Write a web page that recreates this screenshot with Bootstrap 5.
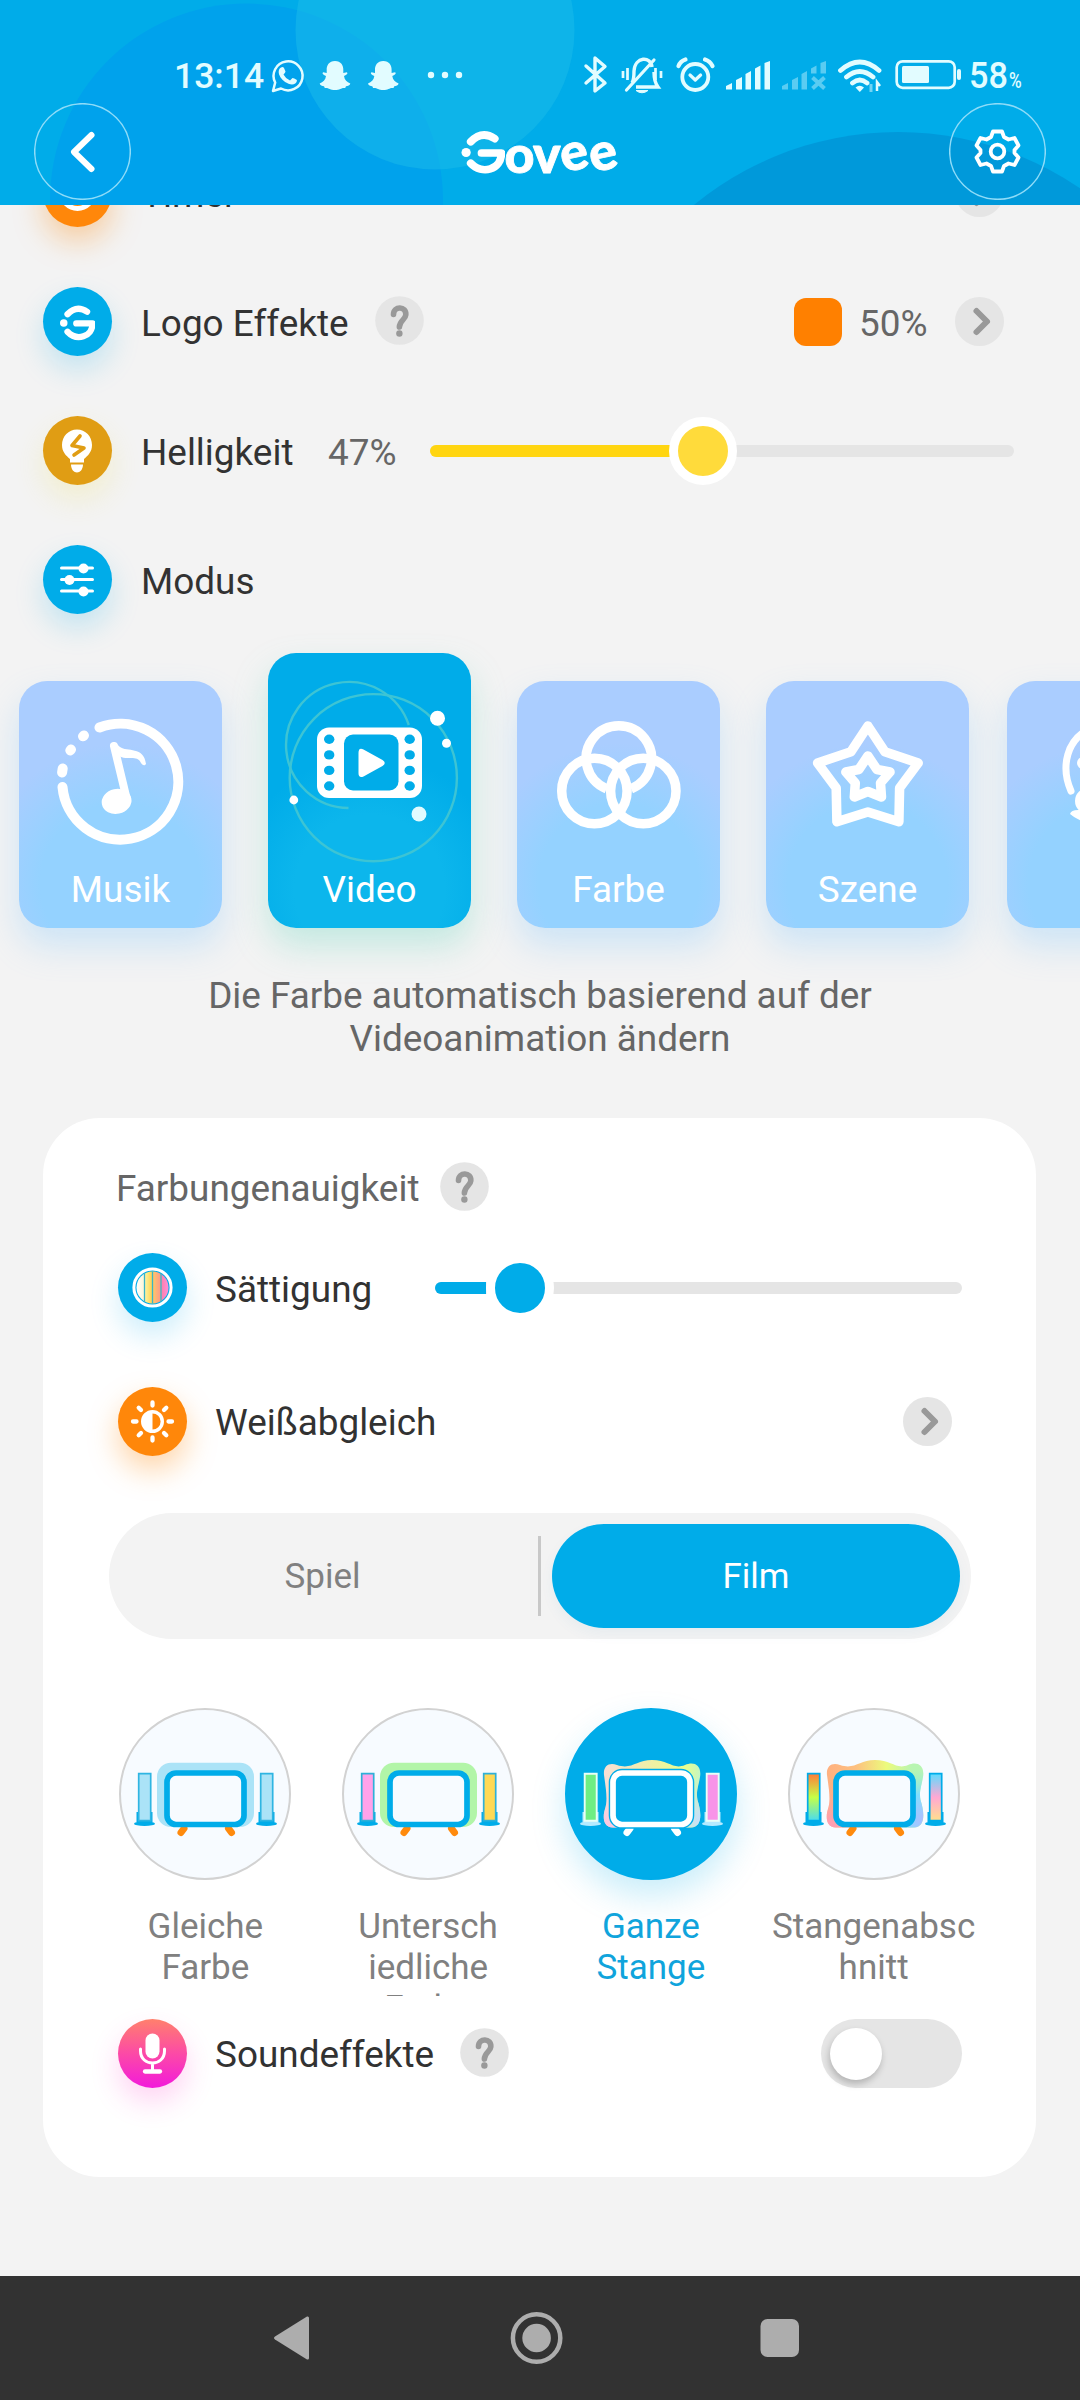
<!DOCTYPE html>
<html lang="de">
<head>
<meta charset="utf-8">
<title>Govee</title>
<link href="https://cdn.jsdelivr.net/npm/bootstrap@5.3.0/dist/css/bootstrap.min.css" rel="stylesheet">
<style>
html,body{margin:0;background:#f3f3f3}
body{width:1080px;height:2400px;overflow:hidden;font-family:Roboto,"Noto Sans",sans-serif;font-size:36.9px;line-height:43px;color:#323232}
svg{display:block;flex:none}
.topbar{height:205px;background:#00ace9;z-index:2;overflow:hidden;color:#fff}
.decor{left:0;top:0}
.statusrow{padding:52px 0 0 174px;height:103px;color:#e2fcff}
.clock{font-size:35.500px;font-weight:500;width:89px;line-height:48px}
.batt{font-size:36px;font-weight:500;width:40px;line-height:48px;margin-left:2px;transform:scaleX(.95);transform-origin:0 50%}
.pct{font-size:21.500px;font-weight:500;line-height:24px;padding-top:17px;transform:scaleX(.8);transform-origin:0 50%}
.appbar{padding:0 34px;height:97px}
.wordmark{overflow:visible}
.scroller{margin-top:-77px;height:2148px;overflow:hidden}
.setting{height:129px;padding:0 76px 0 43px}
.setting>.cap{margin-left:29px}
.orb{width:69px;height:69px;border-radius:50%;flex:none}
.orb-blue{background:#00ace9;box-shadow:0 14px 30px rgba(0,172,233,.2)}
.orb-orange{background:#ff870a;box-shadow:0 14px 30px rgba(255,135,10,.35)}
.orb-amber{background:#e09d14;box-shadow:0 14px 30px rgba(240,220,60,.2)}
.orb-pink{background:linear-gradient(#ff806c,#fc4aa6 50%,#f21adb);box-shadow:0 14px 28px rgba(255,60,200,.22)}
.cap{padding-top:3px;white-space:nowrap}
.muted{color:#666}
.helpmark{margin-bottom:2px}
.swatch{width:48px;height:48px;border-radius:12px;background:#ff8000}
.track{height:12px;border-radius:6px;background:#e5e5e5}
.fillbar{height:12px;border-radius:6px 0 0 6px}
.knob{width:68px;height:68px;border-radius:50%;border:9px solid #fff;top:-28px;transform:translateX(-50%)}
.modes{height:284px;padding-left:19px;gap:46px}
.mode{width:203px;height:247px;border-radius:28px;flex:none;color:#fff;background:radial-gradient(circle at 50% 82%,#94d2ff 0,#94d2ff 80px,#aacdff 140px);box-shadow:0 18px 34px rgba(120,195,255,.3)}
.mode.on{height:275px;background:radial-gradient(circle at 50% 86%,#0cb6ec 0,#0cb6ec 75px,#00ace9 135px);box-shadow:0 18px 34px rgba(110,215,195,.36)}
.mode span{line-height:46px;height:61px}
.info{padding-top:46px;height:190px;color:#666;line-height:43px}
.panel{margin:0 44px 0 43px;height:1059px;border-radius:57px;background:#fff}
.seg{margin:0 65px 0 66px;height:126px;border-radius:63px;background:#f3f3f3;font-size:35px}
.seg .pill{width:408px;height:104px;border-radius:52px;background:#00ace9;color:#fff;box-shadow:0 6px 14px rgba(0,120,170,.05)}
.scenes{padding:69px 51px 0;height:357px;font-size:35px;line-height:41px;color:#808080}
.scene{width:223px;height:288px}
.disc{width:172px;height:172px;border-radius:50%;background:#f7fbff;border:2px solid #d2d2d2}
.disc.on{background:#00ace9;border-color:#00ace9;box-shadow:0 16px 34px rgba(0,172,233,.22)}
.disc svg{margin:-2px -3px -2px -1px}
.cliptext{height:91px;margin-top:26px;overflow:hidden}
.toggle{width:141px;height:69px;border-radius:35px;background:#e5e5e5;padding:8.500px}
.toggle div{width:52px;height:52px;border-radius:50%;background:#fff;box-shadow:-1px 4px 7px rgba(0,0,0,.22)}
.sysnav{height:124px;background:#323232}
</style>
</head>
<body>
<svg width="0" height="0" class="position-absolute">
<defs>
<symbol id="help" viewBox="0 0 49 49"><circle cx="24.500" cy="24.500" r="24.300" fill="#e5e5e5"/><path d="M18.500 18.500c0-9 13-8.500 12.300.3c-.3 5-6.200 5.500-6.400 12.200" fill="none" stroke="#999" stroke-width="5.600" stroke-linecap="round"/><circle cx="24.400" cy="37.500" r="3.200" fill="#999"/></symbol>
<symbol id="go" viewBox="0 0 49 49"><circle cx="24.500" cy="24.500" r="24.500" fill="#e5e5e5"/><path d="M21.500 14l10.500 10.500L21.500 35" fill="none" stroke="#999" stroke-width="6" stroke-linecap="round" stroke-linejoin="round"/></symbol>
<symbol id="gmark" viewBox="0 0 42 42"><g fill="none" stroke="#fff" stroke-width="7.500" stroke-linecap="round"><path d="M9 10.500Q20-1 32.500 7.500"/><path d="M9 31.500C20 43 39 38 39 21.500H19.500" stroke-linejoin="round"/></g><circle cx="4.500" cy="21" r="4.500" fill="#fff"/></symbol>
<symbol id="stand" viewBox="0 0 172 172"><path d="M16.500 104h16v10h-16zM138.500 104h16v10h-16z"/><ellipse cx="24.500" cy="115.700" rx="10.500" ry="2.300"/><ellipse cx="146.500" cy="115.700" rx="10.500" ry="2.300"/></symbol>
<path id="wave" d="M38 67C37 58 43 54 51 57C66 62 70 52 86 52C103 52 107 62 119 57C128 53 136 57 134 69C132 80 130 84 131.500 92C136 106 136 119 125 119.500H47C36 119 37 107 39 101C42 92 40 82 38 67Z"/>
<linearGradient id="top4"><stop offset="0" stop-color="#ffb080"/><stop offset=".3" stop-color="#fdc080"/><stop offset=".62" stop-color="#ecfb7c"/><stop offset=".88" stop-color="#b8f5b2"/></linearGradient>
<linearGradient id="top3"><stop offset="0" stop-color="#f7dfd6"/><stop offset=".5" stop-color="#f0f0a4"/><stop offset=".85" stop-color="#e8ff90"/><stop offset="1" stop-color="#c4f6c0"/></linearGradient>
<radialGradient id="bl" gradientUnits="userSpaceOnUse" cx="38" cy="122" r="50"><stop offset="0" stop-color="#ff98c4"/><stop offset="1" stop-color="#ffa890" stop-opacity="0"/></radialGradient>
<radialGradient id="br" gradientUnits="userSpaceOnUse" cx="136" cy="112" r="52"><stop offset="0" stop-color="#b0bcff"/><stop offset=".5" stop-color="#80deff"/><stop offset="1" stop-color="#a0f0d0" stop-opacity="0"/></radialGradient>
<radialGradient id="bl3" gradientUnits="userSpaceOnUse" cx="38" cy="122" r="50"><stop offset="0" stop-color="#fcbfe6"/><stop offset="1" stop-color="#f7dfd6" stop-opacity="0"/></radialGradient>
<radialGradient id="br3" gradientUnits="userSpaceOnUse" cx="136" cy="112" r="50"><stop offset="0" stop-color="#c8dcff"/><stop offset="1" stop-color="#c0f0e0" stop-opacity="0"/></radialGradient>
<linearGradient id="barL" x2="0" y2="1"><stop offset="0" stop-color="#ff7b3a"/><stop offset=".5" stop-color="#c6ff46"/><stop offset="1" stop-color="#48dcf0"/></linearGradient>
<linearGradient id="barR" x2="0" y2="1"><stop offset="0" stop-color="#5cdcff"/><stop offset=".5" stop-color="#ffa8d4"/><stop offset="1" stop-color="#ffe08c"/></linearGradient>
<linearGradient id="sat"><stop offset="0" stop-color="#fff"/><stop offset=".22" stop-color="#fff6d8"/><stop offset=".3" stop-color="#ffee90"/><stop offset=".5" stop-color="#ffd050"/><stop offset=".55" stop-color="#ffc070"/><stop offset=".74" stop-color="#ff9c84"/><stop offset=".8" stop-color="#ff80b0"/><stop offset="1" stop-color="#ff90d8"/></linearGradient>
</defs></svg>

<header class="topbar position-relative">
<svg class="decor position-absolute" width="1080" height="205"><circle cx="246.500" cy="200" r="196.500" fill="#00a2ec"/><circle cx="435" cy="30" r="139.500" fill="#1cbbea" fill-opacity=".5"/><circle cx="898" cy="454" r="322" fill="#0099da"/></svg>
<div class="statusrow d-flex align-items-start position-relative">
<div class="clock">13:14</div>
<svg width="200" height="46" viewBox="263 52 200 46" fill="#e2fcff"><path d="M273 91l2.200-8.500A14.500 14.500 0 1 1 281 88.500Z" fill="none" stroke="#e2fcff" stroke-width="2.500" stroke-linejoin="round"/><path d="M281 67.500q2-1 3 .5l1.500 3.500q0 1-2 3q2 4 6.500 6l2.500-2.500q4 1 4.500 2.500c-.5 4-5 4.800-8.500 3.200c-5-2-8-5.500-9.500-9.500c-.8-3 0-5.700 2-6.700z"/>
<path id="ghost" d="M335 61c6 0 8.500 4.500 8.300 9v3l3.500-.7c1.500 1 .2 2.500-2.800 3.700c.5 4 3 6 6.300 7.500c-.3 2-2.500 2.300-4.300 2.800l-.8 1.700c-4-.5-5 2-10.200 2s-6.200-2.500-10.200-2l-.8-1.700c-1.800-.5-4-.8-4.300-2.800c3.300-1.500 5.800-3.500 6.300-7.500c-3-1.200-4.300-2.700-2.800-3.700l3.500.7v-3c-.2-4.500 2.300-9 8.300-9z"/><use href="#ghost" x="48.300"/>
<circle cx="431" cy="75" r="3.200"/><circle cx="445" cy="75" r="3.200"/><circle cx="459" cy="75" r="3.200"/></svg>
<svg width="504" height="46" viewBox="463 52 504 46" fill="none" stroke="#e2fcff">
<path d="M586 66l19 17l-10 8V58l10 8.500l-19 16.500" stroke-width="3.400" stroke-linejoin="round" stroke-linecap="round"/>
<path d="M632 83c2-3 2-7 2-12c1-15 17-15 18-4M654 72c0 8 1 11 4 15h-22" stroke-width="3.400"/><path d="M626.500 90L654 60" stroke-width="3.200" stroke-linecap="round"/><path d="M627.500 68v12M623 71v7M655.500 68v12M661 71v7" stroke-width="2.700"/><path d="M636 90.500h12q-6 4.500-12 0z" fill="#e2fcff" stroke-width="1"/>
<circle cx="695.300" cy="77" r="13" stroke-width="3.800"/><path d="M690 75l5.300 5l5.300-5" stroke-width="3.200" stroke-linecap="round" stroke-linejoin="round"/><path d="M678.500 66q2-5 7-6.500M705 59.500q5 1.500 7.500 6.500" stroke-width="4.200" stroke-linecap="round"/>
<g fill="#e2fcff" stroke="none"><path d="M726 86l6-3v6.500h-6zM736 80l6-3v12.500h-6zM745.500 74l5.500-3v18.500h-5.500zM755 68.500l5.500-3v24H755zM764.500 63l5.500-2v28.500h-5.500z"/>
<path opacity=".4" d="M782 86l6-3v6.500h-6zM792 80l6-3v12.500h-6zM801.500 74l5.500-3v18.500h-5.500zM811 68.500l5.500-3v8H811zM820.500 63l5.500-2v12.500h-5.500z"/></g><path opacity=".4" d="M812.500 77.500l12 11M824.500 77.500l-12 11" stroke-width="4"/>
<path d="M840.500 70.500q19.300-17 38.500 0M846.500 77q13.300-11 26.500 0M852.500 83q7.300-6 14.500 0" stroke-width="4.800" stroke-linecap="round"/><path d="M855.500 87.500q4.300-3.500 8.500 0l-4.200 4.500z" fill="#e2fcff" stroke="none"/><path d="M871 84v8" stroke-width="3" opacity=".5"/><path d="M877 91v-9l3 4" stroke-width="2.500"/>
<rect x="896.700" y="61.300" width="58" height="26.500" rx="6" stroke-width="2.700"/><rect x="902" y="66" width="27" height="17" rx="1.500" fill="#e2fcff" stroke="none"/><path d="M959 71v7" stroke-width="4" stroke-linecap="round"/></svg>
<div class="batt">58</div><div class="pct">%</div>
</div>
<div class="appbar d-flex justify-content-between align-items-center position-relative">
<svg width="97" height="97" viewBox="0 0 97 97" fill="none" stroke="#fff"><circle cx="48.500" cy="48.500" r="47.800" stroke="#8fdcf8" stroke-width="1.500"/><path d="M57.500 32L40 49L57.500 66" stroke-width="6" stroke-linecap="round" stroke-linejoin="round"/></svg>
<svg class="wordmark" width="160" height="80" viewBox="460 110 160 80"><use href="#gmark" x="461" y="129" width="44" height="43"/><text font-family="Lato,sans-serif" font-weight="900" font-size="52" fill="#fff" stroke="#fff" stroke-width=".8" stroke-linejoin="round" y="171 171 170.500 170.500" x="504.500 533 563.500 592.500" rotate="0 0 -12 -12">ovee</text></svg>
<svg width="97" height="97" viewBox="0 0 97 97" fill="none" stroke="#fff"><circle cx="48.500" cy="48.500" r="47.800" stroke="#8fdcf8" stroke-width="1.500"/><circle cx="48.500" cy="48.500" r="6.800" stroke-width="3.800"/><path d="M44 28.500h9l2 5.500l4.500 2.500l6-1.500l4 7.500l-4 4.500v3l4 4.500l-4 7.500l-6-1.500l-4.500 2.500l-2 5.500h-9l-2-5.500l-4.500-2.500l-6 1.500l-4-7.500l4-4.500v-3l-4-4.500l4-7.500l6 1.500l4.500-2.500z" stroke-width="3.800" stroke-linejoin="round"/></svg>
</div>
</header>

<main class="scroller">
<div class="setting d-flex align-items-center"><div class="orb orb-orange"><svg width="69" height="69"><circle cx="34.500" cy="34.500" r="16" fill="none" stroke="#fff" stroke-width="5"/></svg></div><div class="cap">Timer</div><svg class="ms-auto" width="49" height="49"><use href="#go"/></svg></div>
<div class="setting d-flex align-items-center"><div class="orb orb-blue"><svg width="69" height="69"><use href="#gmark" x="17" y="18" width="35" height="36"/></svg></div><div class="cap" style="width:234px">Logo Effekte</div><svg width="49" height="49" class="helpmark"><use href="#help"/></svg><div class="swatch ms-auto"></div><div class="cap muted" style="margin-left:17px;width:96px">50%</div><svg width="49" height="49"><use href="#go"/></svg></div>
<div class="setting d-flex align-items-center"><div class="orb orb-amber"><svg width="69" height="69" fill="#fff"><path d="M34 13.500c8.500 0 15 7 15 15.500c0 7-4 10.500-8 14v3.500H27V43c-4-3.500-8-7-8-14c0-8.500 6.500-15.500 15-15.500zM28 48.500h12c0 5-3 8-6 8s-6-3-6-8z"/><path d="M37 20l-8 9.500l12 2.500l-10 7" fill="none" stroke="#e09d14" stroke-width="3.600" stroke-linecap="round" stroke-linejoin="round"/></svg></div><div class="cap" style="width:187px">Helligkeit</div><div class="cap muted" style="margin-left:0;width:102px">47%</div><div class="track position-relative flex-grow-1" style="margin-right:-10px"><div class="fillbar" style="width:47%;background:#ffd510"></div><div class="knob position-absolute" style="left:46.700%;background:#ffdb3b"></div></div></div>
<div class="setting d-flex align-items-center"><div class="orb orb-blue"><svg width="69" height="69" stroke="#fff" fill="#fff" stroke-width="3" stroke-linecap="round"><path d="M18.500 23h31M18.500 34.500h31M18.500 46h31"/><g stroke="none"><circle cx="40.500" cy="23.500" r="5"/><circle cx="26.500" cy="35" r="5"/><circle cx="40.500" cy="46.500" r="5"/></g></svg></div><div class="cap">Modus</div></div>

<div class="modes d-flex align-items-end">
<div class="mode d-flex flex-column justify-content-between align-items-center"><svg width="203" height="185" viewBox="19 681 203 185" fill="none" stroke="#fff" stroke-width="10" stroke-linecap="round"><path d="M99.500 727.500A58 58 0 1 1 62.500 787M62.700 768.500l-.6 4M71 749.500l-.7 1M84 735.500l-1 .8"/><path d="M114 746l12.500 52" stroke-width="8"/><path d="M111 744c3-3 6 0 9 3c7 5 24-1 26 17c-2 3-4 0-5-1c-4-9-14-2-22-7z" fill="#fff" stroke="none"/><ellipse cx="116.500" cy="801.500" rx="15" ry="12.500" transform="rotate(-12 116 801)" fill="#fff" stroke="none"/></svg><span>Musik</span></div>
<div class="mode on d-flex flex-column justify-content-between align-items-center"><svg width="203" height="213" viewBox="268 653 203 213"><g fill="none" stroke="#3dc4d4" stroke-width="2.400"><circle cx="373.300" cy="777.700" r="83.600"/><path d="M408.800 725A63 63 0 1 0 348.500 808"/></g><rect x="317" y="727.500" width="105" height="70.500" rx="12" fill="#fff"/><rect x="344" y="734.500" width="54.500" height="56" rx="9" fill="#00ace9"/><path d="M358.500 753q0-6 5-3.500l19 10.500q4.500 3 0 6l-19 10.500q-5 2-5-3.500z" fill="#fff"/><g fill="#00ace9"><ellipse cx="329.200" cy="739.300" rx="5.200" ry="4.700"/><ellipse cx="329.200" cy="754.900" rx="5.200" ry="4.700"/><ellipse cx="329.200" cy="770.400" rx="5.200" ry="4.700"/><ellipse cx="329.200" cy="786" rx="5.200" ry="4.700"/><ellipse cx="409.700" cy="739.300" rx="5.200" ry="4.700"/><ellipse cx="409.700" cy="754.900" rx="5.200" ry="4.700"/><ellipse cx="409.700" cy="770.400" rx="5.200" ry="4.700"/><ellipse cx="409.700" cy="786" rx="5.200" ry="4.700"/></g><g fill="#fff"><circle cx="437.500" cy="718.300" r="7.500"/><circle cx="446.500" cy="743.300" r="4.500"/><circle cx="293.800" cy="800" r="4.400"/><circle cx="419" cy="814" r="7.500" fill="#e0fbff"/></g></svg><span>Video</span></div>
<div class="mode d-flex flex-column justify-content-between align-items-center"><svg width="203" height="185" viewBox="517 681 203 185" fill="none" stroke="#fff" stroke-width="9.500"><path d="M606.500 788.800A32.700 32.700 0 1 1 631.200 788.800"/><circle cx="594.400" cy="791" r="32.700"/><circle cx="643.300" cy="791" r="32.700"/></svg><span>Farbe</span></div>
<div class="mode d-flex flex-column justify-content-between align-items-center"><svg width="203" height="185" viewBox="766 681 203 185" fill="none" stroke="#fff" stroke-width="9.500" stroke-linejoin="round"><path d="M867.900 726L884.800 751.700L918.200 763L899.600 788L898.900 821.700L867.900 812L836.900 821.700L836.200 788L817.600 763L851 751.700Z"/><path d="M867.900 756L877 769.500L890 772L880.500 783L881.500 797L867.900 791.500L854.300 797L855.300 783L845.800 772L858.800 769.500Z"/></svg><span>Szene</span></div>
<div class="mode" style="margin-left:-8px"><svg width="203" height="185" viewBox="1007 681 203 185" fill="none" stroke="#fff" stroke-width="7" stroke-linecap="round"><path d="M1094 727C1065 738 1061 768 1071 791"/><circle cx="1088" cy="801" r="10" fill="#fff" stroke-width="6"/><circle cx="1083" cy="763" r="6" fill="#fff" stroke="none"/><path d="M1070 814q1-4 8-4h14v14q-14-3-22-10z" fill="#fff" stroke="none"/></svg></div>
</div>
<p class="info text-center mb-0">Die Farbe automatisch basierend auf der<br>Videoanimation ändern</p>

<section class="panel">
<div class="d-flex align-items-center muted" style="height:117px;padding:20px 0 0 73px"><div class="cap pt-1" style="width:324px">Farbungenauigkeit</div><svg width="49" height="49"><use href="#help"/></svg></div>
<div class="d-flex align-items-center" style="height:105px;padding-left:75px;padding-right:74px"><div class="orb orb-blue"><svg width="69" height="69"><circle cx="34.500" cy="34.500" r="18.600" fill="none" stroke="#fff" stroke-width="3"/><circle cx="34.500" cy="34.500" r="16" fill="url(#sat)"/><path d="M26.500 20v29M34.500 18.500v32M43 20v29" stroke="#3ab5c8" stroke-width="1.300"/></svg></div><div class="cap pt-1" style="margin-left:28px;width:220px">Sättigung</div><div class="track position-relative flex-grow-1"><div class="fillbar" style="width:51px;background:#00ace9"></div><div class="knob position-absolute" style="left:85px;background:#00ace9"></div></div></div>
<div class="d-flex align-items-center" style="height:162px;padding-left:75px;padding-right:84px"><div class="orb orb-orange"><svg width="69" height="69" fill="none" stroke="#fff" stroke-linecap="round"><circle cx="34.500" cy="34.500" r="9.800" stroke-width="3.400"/><path d="M34.500 24.500a10 10 0 0 0 0 20z" fill="#fff" stroke="none"/><path d="M34.500 15.500v3M34.500 50.500v3M15 34.500h3.500M50.500 34.500H54M20.700 20.700l2.300 2.300M46 46l2.300 2.300M20.700 48.300L23 46M46 23l2.300-2.300" stroke-width="4.300"/></svg></div><div class="cap" style="margin-left:28px">Weißabgleich</div><svg class="ms-auto" width="49" height="49"><use href="#go"/></svg></div>
<div style="height:11px"></div>
<div class="seg d-flex align-items-center"><div class="text-center" style="width:427px;color:#808080">Spiel</div><div style="width:3px;height:80px;margin:0 11px 0 2px;background:#c8c8c8"></div><div class="pill d-flex align-items-center justify-content-center">Film</div></div>
<div class="scenes d-flex">
<div class="scene d-flex flex-column align-items-center text-center"><div class="disc"><svg width="172" height="172"><rect x="37" y="54.700" width="97" height="64.300" rx="14" fill="#abe3f7"/><path d="M64 120.500l-3 4M108.500 120.500l3 4" stroke="#ff8a0d" stroke-width="7" stroke-linecap="round"/><rect x="47" y="65" width="77" height="51.500" rx="9" fill="#f7fbff" stroke="#00ace9" stroke-width="5.700"/><use href="#stand" fill="#00ace9"/><path d="M18.700 65.700h12v47h-12zM140.700 65.700h12v47h-12z" fill="#abe3f7" stroke="#2fb5e2" stroke-width="1.700"/></svg></div><div class="cliptext">Gleiche<br>Farbe</div></div>
<div class="scene d-flex flex-column align-items-center text-center"><div class="disc"><svg width="172" height="172"><rect x="37" y="54.700" width="97" height="64.300" rx="14" fill="#b2f5a8"/><path d="M64 120.500l-3 4M108.500 120.500l3 4" stroke="#ff8a0d" stroke-width="7" stroke-linecap="round"/><rect x="47" y="65" width="77" height="51.500" rx="9" fill="#f7fbff" stroke="#00ace9" stroke-width="5.700"/><use href="#stand" fill="#00ace9"/><g stroke="#2fb0d8" stroke-width="1.700"><path d="M18.700 65.700h12v47h-12z" fill="#ffa2ea"/><path d="M140.700 65.700h12v47h-12z" fill="#ffd955"/></g></svg></div><div class="cliptext">Untersch<br>iedliche<br>Farbe</div></div>
<div class="scene d-flex flex-column align-items-center text-center"><div class="disc on"><svg width="172" height="172"><use href="#wave" fill="url(#top3)"/><use href="#wave" fill="url(#bl3)"/><use href="#wave" fill="url(#br3)"/><path d="M64 120.500l-3 4M108.500 120.500l3 4" stroke="#fff" stroke-width="7" stroke-linecap="round"/><rect x="47" y="65" width="77" height="51.500" rx="9" fill="none" stroke="#00ace9" stroke-width="8.500"/><rect x="47" y="65" width="77" height="51.500" rx="9" fill="#00ace9" stroke="#fff" stroke-width="5.700"/><use href="#stand" fill="#b4eaff"/><g stroke="#e8fff8" stroke-width="1.900"><path d="M18.700 65.700h12v47h-12z" fill="#6eee84"/><path d="M140.700 65.700h12v47h-12z" fill="#f893e8"/></g></svg></div><div class="cliptext" style="color:#10a4dc">Ganze<br>Stange</div></div>
<div class="scene d-flex flex-column align-items-center text-center"><div class="disc"><svg width="172" height="172"><use href="#wave" fill="url(#top4)"/><use href="#wave" fill="url(#bl)"/><use href="#wave" fill="url(#br)"/><path d="M64 120.500l-3 4M108.500 120.500l3 4" stroke="#ff8a0d" stroke-width="7" stroke-linecap="round"/><rect x="47" y="65" width="77" height="51.500" rx="9" fill="#f7fbff" stroke="#00ace9" stroke-width="5.700"/><use href="#stand" fill="#00ace9"/><g stroke="#00ace9" stroke-width="1.700"><path d="M18.700 65.700h12v47h-12z" fill="url(#barL)"/><path d="M140.700 65.700h12v47h-12z" fill="url(#barR)"/></g></svg></div><div class="cliptext">Stangenabsc<br>hnitt</div></div>
</div>
<div class="d-flex align-items-center" style="height:115px;padding-left:75px;padding-right:74px"><div class="orb orb-pink"><svg width="69" height="69" fill="none" stroke="#fff" stroke-linecap="round"><rect x="27.500" y="14.500" width="14" height="25" rx="7" fill="#fff" stroke="none"/><path d="M22.500 30v2c0 16 24 16 24 0v-2M34.500 44v7" stroke-width="3"/><path d="M27 52.500h15" stroke-width="4.300"/></svg></div><div class="cap" style="margin-left:28px;width:245px;padding-top:2px">Soundeffekte</div><svg width="49" height="49" class="helpmark"><use href="#help"/></svg><div class="toggle ms-auto"><div></div></div></div>
</section>
</main>

<footer class="sysnav">
<svg width="1080" height="124" viewBox="0 2276 1080 124" fill="#adadad"><path d="M275 2336.500l32-20q2-.5 2 1.500v40q0 2-2 1.500l-32-20q-2-1.500 0-3z"/><circle cx="536.600" cy="2338" r="23.700" fill="none" stroke="#adadad" stroke-width="4.500"/><circle cx="536.600" cy="2338" r="14.300"/><rect x="760.500" y="2319" width="38.500" height="38" rx="7"/></svg>
</footer>
<script src="https://cdn.jsdelivr.net/npm/bootstrap@5.3.0/dist/js/bootstrap.bundle.min.js"></script>
</body>
</html>
